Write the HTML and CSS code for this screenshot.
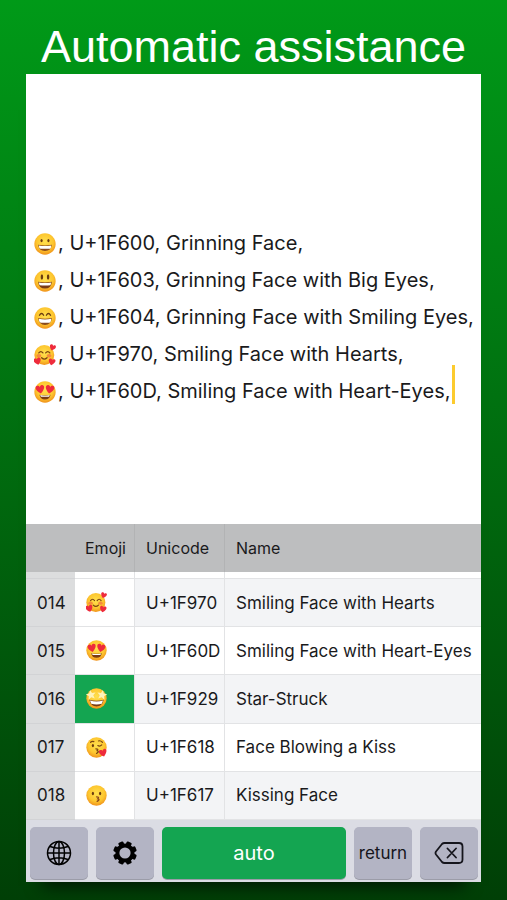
FILE: index.html
```html
<!DOCTYPE html>
<html lang="en">
<head>
    <meta charset="UTF-8">
    <meta name="viewport" content="width=device-width, initial-scale=1.0">
    <title>Automatic assistance</title>
    <link rel="stylesheet" href="styles.css">
</head>
<body>

<h1 class="title">Automatic assistance</h1>

<main class="panel">
    <!-- Text being typed -->
    <div class="editor" role="textbox" aria-multiline="true" aria-label="Text">
        <p class="line"><svg class="emoji"><use href="#grinning"/></svg>, U+1F600, Grinning Face,</p>
        <p class="line"><svg class="emoji"><use href="#bigeyes"/></svg>, U+1F603, Grinning Face with Big Eyes,</p>
        <p class="line"><svg class="emoji"><use href="#smilingeyes"/></svg>, U+1F604, Grinning Face with Smiling Eyes,</p>
        <p class="line"><svg class="emoji"><use href="#hearts"/></svg>, U+1F970, Smiling Face with Hearts,</p>
        <p class="line"><svg class="emoji"><use href="#hearteyes"/></svg>, U+1F60D, Smiling Face with Heart-Eyes,<span class="caret"></span></p>
    </div>

    <!-- Emoji table -->
    <table class="emoji-table">
        <thead>
            <tr>
                <th class="number"></th>
                <th class="symbol">Emoji</th>
                <th class="code">Unicode</th>
                <th>Name</th>
            </tr>
        </thead>
        <tbody>
            <tr class="partial"><td class="number"></td><td></td><td></td><td></td></tr>
            <tr>
                <td class="number">014</td>
                <td class="symbol"><svg class="emoji"><use href="#hearts"/></svg></td>
                <td>U+1F970</td>
                <td>Smiling Face with Hearts</td>
            </tr>
            <tr>
                <td class="number">015</td>
                <td class="symbol"><svg class="emoji"><use href="#hearteyes"/></svg></td>
                <td>U+1F60D</td>
                <td>Smiling Face with Heart-Eyes</td>
            </tr>
            <tr>
                <td class="number">016</td>
                <td class="symbol selected"><svg class="emoji"><use href="#starstruck"/></svg></td>
                <td>U+1F929</td>
                <td>Star-Struck</td>
            </tr>
            <tr>
                <td class="number">017</td>
                <td class="symbol"><svg class="emoji"><use href="#blowkiss"/></svg></td>
                <td>U+1F618</td>
                <td>Face Blowing a Kiss</td>
            </tr>
            <tr>
                <td class="number">018</td>
                <td class="symbol"><svg class="emoji"><use href="#kissing"/></svg></td>
                <td>U+1F617</td>
                <td>Kissing Face</td>
            </tr>
        </tbody>
    </table>

    <!-- Keyboard row -->
    <div class="keys">
        <button class="key" type="button" aria-label="Next keyboard">
            <svg class="icon" viewBox="0 0 26 26" fill="none" stroke="#000" stroke-width="1.5">
                <circle cx="13" cy="13" r="11.5"/>
                <ellipse cx="13" cy="13" rx="5.5" ry="11.5"/>
                <path d="M13 1.5V24.5M1.5 13H24.5M4 6.5Q13 10 22 6.5M4 19.5Q13 16 22 19.5"/>
            </svg>
        </button>
        <button class="key" type="button" aria-label="Settings">
            <svg class="icon" viewBox="-13 -13 26 26">
                <rect x="-2.7" y="-11.8" width="5.4" height="23.6" rx="1.2" transform="rotate(22.5)"/>
                <rect x="-2.7" y="-11.8" width="5.4" height="23.6" rx="1.2" transform="rotate(67.5)"/>
                <rect x="-2.7" y="-11.8" width="5.4" height="23.6" rx="1.2" transform="rotate(112.5)"/>
                <rect x="-2.7" y="-11.8" width="5.4" height="23.6" rx="1.2" transform="rotate(157.5)"/>
                <circle r="9.6"/>
                <circle r="5.6" fill="#b3b4c4"/>
            </svg>
        </button>
        <button class="key key-auto" type="button">auto</button>
        <button class="key" type="button">return</button>
        <button class="key" type="button" aria-label="Delete">
            <svg class="icon icon-delete" viewBox="0 0 30 24" fill="none" stroke="#15151c" stroke-width="1.8" stroke-linejoin="round" stroke-linecap="round">
                <path d="M10.5 2H25Q28.5 2 28.5 5.5V18.5Q28.5 22 25 22H10.5Q9 22 8 21L2 13.5Q1 12 2 10.500L8 3Q9 2 10.5 2ZM13.5 7.5 22 16.5M22 7.5 13.5 16.5"/>
            </svg>
        </button>
    </div>
</main>

<!-- Emoji artwork, reused by the editor and the table -->
<svg class="sprite" aria-hidden="true">
    <defs>
        <radialGradient id="skin" cx="50%" cy="40%" r="60%">
            <stop offset="0" stop-color="#ffe04e"/>
            <stop offset="0.65" stop-color="#fdc62f"/>
            <stop offset="1" stop-color="#f0931b"/>
        </radialGradient>
        <path id="heart" d="M0 4.5C-6 0-5-4-2.4-4-1-4 0-3 0-2 0-3 1-4 2.4-4 5-4 6 0 0 4.5Z" fill="#ee2b3c"/>
        <path id="star" d="M0-5 1.4-1.7 5-1.5 2.3.8 3.2 4.4 0 2.4-3.2 4.4-2.3.8-5-1.5-1.4-1.7Z" fill="#fff3b8"/>
    </defs>
    <symbol id="grinning" viewBox="0 0 32 32">
        <circle cx="16" cy="16" r="15.5" fill="url(#skin)"/>
        <ellipse cx="11" cy="11" rx="1.6" ry="2.4" fill="#6b3c10"/>
        <ellipse cx="21" cy="11" rx="1.6" ry="2.4" fill="#6b3c10"/>
        <path d="M6 17Q16 19 26 17Q25 26 16 26T6 17Z" fill="#8a4a1c"/>
        <path d="M7 18Q16 20 25 18Q25 23 22.5 23H9.5Q7 22 7 18Z" fill="#fff"/>
    </symbol>
    <symbol id="bigeyes" viewBox="0 0 32 32">
        <circle cx="16" cy="16" r="15.5" fill="url(#skin)"/>
        <ellipse cx="11.5" cy="10" rx="1.8" ry="4" fill="#6b3c10"/>
        <ellipse cx="20.5" cy="10" rx="1.8" ry="4" fill="#6b3c10"/>
        <path d="M6 17Q16 19 26 17Q25 27 16 27T6 17Z" fill="#7a3b14"/>
        <path d="M7 18Q16 20 25 18L24 22Q16 23 8 22Z" fill="#fff"/>
    </symbol>
    <symbol id="smilingeyes" viewBox="0 0 32 32">
        <circle cx="16" cy="16" r="15.5" fill="url(#skin)"/>
        <path d="M8 12Q11 7 14 12M18 12Q21 7 24 12" fill="none" stroke="#6b3c10" stroke-width="2" stroke-linecap="round"/>
        <path d="M6 16Q16 18 26 16Q25 26 16 26T6 16Z" fill="#8a4a1c"/>
        <path d="M7 17Q16 19 25 17Q25 23 22 23H10Q7 22 7 17Z" fill="#fff"/>
    </symbol>
    <symbol id="hearts" viewBox="0 0 32 32">
        <circle cx="15" cy="16" r="14.5" fill="url(#skin)"/>
        <ellipse cx="7" cy="17" rx="3.5" ry="2.5" fill="#f58a3c"/>
        <ellipse cx="22" cy="17" rx="3.5" ry="2.5" fill="#f58a3c"/>
        <path d="M7 13Q10 9 13 13M17 13Q20 9 23 13M11 20Q15 24 19 20" fill="none" stroke="#7a4512" stroke-width="1.8" stroke-linecap="round"/>
        <use href="#heart" transform="translate(27 5) rotate(18)"/>
        <use href="#heart" transform="translate(5 25) rotate(-15) scale(1.2)"/>
        <use href="#heart" transform="translate(26 26) rotate(12) scale(1.1)"/>
    </symbol>
    <symbol id="hearteyes" viewBox="0 0 32 32">
        <circle cx="16" cy="16" r="15.5" fill="url(#skin)"/>
        <use href="#heart" transform="translate(9 12) rotate(-10) scale(1.4)"/>
        <use href="#heart" transform="translate(23 12) rotate(10) scale(1.4)"/>
        <path d="M8 20Q16 22 24 20Q23 27 16 27T8 20Z" fill="#7a3b14"/>
        <path d="M9 20.5Q16 22.5 23 20.5L22 23H10Z" fill="#fff"/>
    </symbol>
    <symbol id="starstruck" viewBox="0 0 32 32">
        <circle cx="16" cy="16" r="15.5" fill="url(#skin)"/>
        <use href="#star" transform="translate(7.5 10.5) rotate(-10) scale(1.5)"/>
        <use href="#star" transform="translate(24.5 10.5) rotate(10) scale(1.5)"/>
        <path d="M5 18Q16 21 27 18Q25 28 16 28T5 18Z" fill="#7a3b14"/>
        <path d="M6 19Q16 22 26 19L24 24Q16 26 8 24Z" fill="#fff"/>
    </symbol>
    <symbol id="blowkiss" viewBox="0 0 32 32">
        <circle cx="16" cy="16" r="15.5" fill="url(#skin)"/>
        <path d="M7 8Q9 6 12 7M19 6Q22 5 25 8M18 13Q21 15 24 12M15 18Q20 18 17 21Q21 22 16 25" fill="none" stroke="#7a4512" stroke-width="1.8" stroke-linecap="round"/>
        <ellipse cx="10.5" cy="13" rx="1.7" ry="2.5" fill="#6b3c10"/>
        <use href="#heart" transform="translate(26 24) rotate(-15) scale(1.3)"/>
    </symbol>
    <symbol id="kissing" viewBox="0 0 32 32">
        <circle cx="16" cy="16" r="15.5" fill="url(#skin)"/>
        <ellipse cx="10.5" cy="13" rx="1.7" ry="2.7" fill="#6b3c10"/>
        <ellipse cx="21.5" cy="13" rx="1.7" ry="2.7" fill="#6b3c10"/>
        <path d="M16 18Q21 18 18 21Q22 22 17 25" fill="none" stroke="#8a4a1c" stroke-width="2" stroke-linecap="round"/>
    </symbol>
</svg>

</body>
</html>
```
FILE: styles.css
```css
* {
    box-sizing: border-box;
}
body {
    margin: 0;
    min-height: 100vh;
    padding: 0 26px 18px;
    font-family: Inter, "Liberation Sans", sans-serif;
    color: #1a1a1c;
    background: linear-gradient(#009a18, #003f06);
}
.sprite {
    display: block;
    width: 0;
    height: 0;
}
.title {
    margin: 0;
    padding-top: 20px;
    height: 74px;
    font-family: "Liberation Sans", Arial, sans-serif;
    font-size: 45px;
    font-weight: normal;
    line-height: 54px;
    text-align: center;
    white-space: nowrap;
    color: white;
}
.panel {
    background-color: white;
    box-shadow: 0 20px 16px -16px rgba(0, 0, 0, 0.7);
}

/* Editor */
.editor {
    min-height: 450px;
    padding: 151px 8px 0;
}
.line {
    display: flex;
    align-items: center;
    gap: 2px;
    margin: 0;
    font-size: 20px;
    line-height: 37px;
    white-space: nowrap;
}
.emoji {
    display: block;
    flex: none;
    width: 22px;
    height: 22px;
}
.caret {
    width: 3px;
    height: 39px;
    margin-top: -14px;
    background-color: #fccb2e;
}

/* Table */
.emoji-table {
    width: 100%;
    height: 296px;
    table-layout: fixed;
    border-spacing: 0;
    font-size: 17px;
}
th, td {
    padding: 0 0 0 11px;
    border-right: 1px solid #e2e3e5;
    text-align: left;
    font-weight: normal;
    white-space: nowrap;
}
td {
    border-bottom: 1px solid #e2e3e5;
}
th:last-child, td:last-child {
    border-right: none;
}
th {
    height: 48px;
    font-size: 16px;
    background-color: #bdbebf;
    border-color: #b2b3b4;
}
.partial td {
    height: 7px;
}
tbody tr:nth-child(even) {
    background-color: #f3f4f6;
}
.number {
    width: 49px;
    border-right: none;
}
td.number {
    background-color: #dcddde;
    border-color: #d2d3d5;
}
.symbol {
    width: 60px;
    padding-left: 10px;
}
td.symbol {
    padding-left: 11px;
    background-color: white;
}
td.selected {
    background-color: #14a551;
}
.code {
    width: 90px;
}
.emoji-table .emoji {
    width: 21px;
    height: 21px;
}

/* Keyboard */
.keys {
    display: grid;
    grid-template-columns: 58fr 58fr 184fr 58fr 58fr;
    gap: 8px;
    padding: 7px 3px 3px 4px;
    background-color: #dbdce4;
}
.key {
    display: flex;
    align-items: center;
    justify-content: center;
    min-width: 0;
    height: 52px;
    padding: 0;
    border: none;
    border-radius: 5px;
    font-family: inherit;
    font-size: 17px;
    color: #15151c;
    background-color: #b3b4c4;
    box-shadow: 0 1px 0 #9b9ca8;
    cursor: pointer;
}
.key-auto {
    font-size: 20px;
    color: white;
    background-color: #14a551;
}
.icon {
    width: 26px;
    height: 26px;
}
.icon-delete {
    width: 30px;
    height: 24px;
}
```
